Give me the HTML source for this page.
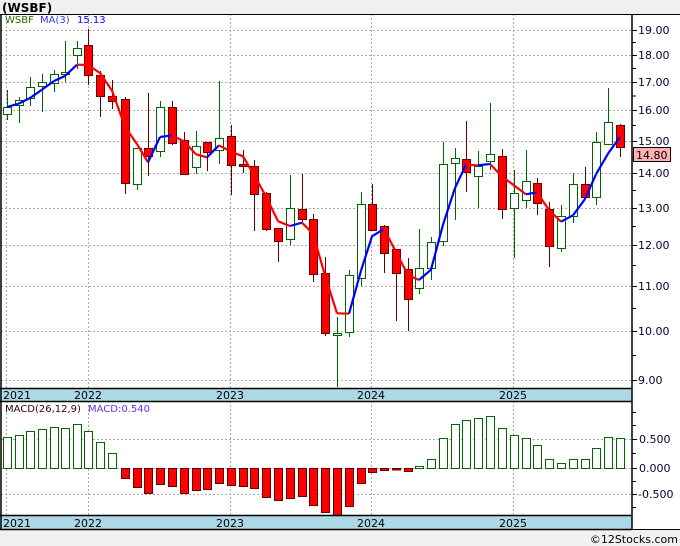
<!DOCTYPE html>
<html><head><meta charset="utf-8"><style>
html,body{margin:0;padding:0;background:#f0f0f0;}
#c{position:relative;width:680px;height:546px;overflow:hidden;font-family:"DejaVu Sans","Liberation Sans",sans-serif;}
</style></head><body><div id="c">
<svg id="s" width="680" height="546" xmlns="http://www.w3.org/2000/svg" style="position:absolute;left:0;top:0" font-family="DejaVu Sans, Liberation Sans, sans-serif">
<rect x="0" y="0" width="680" height="546" fill="#f0f0f0"/>
<rect x="1" y="14" width="679" height="515" fill="#fff"/>
<text x="2" y="12" font-size="12" font-weight="bold" fill="#000">(WSBF)</text>
<g id="g"></g>
</svg>
</div>
<script>
var g=document.getElementById('g'),h='';
function L(x1,y1,x2,y2,c,w,d){h+='<line x1="'+x1+'" y1="'+y1+'" x2="'+x2+'" y2="'+y2+'" stroke="'+c+'" stroke-width="'+(w||1)+'"'+(d?' stroke-dasharray="'+d+'"':'')+'/>';}
function R(x,y,w,ht,f,s){h+='<rect x="'+x+'" y="'+y+'" width="'+w+'" height="'+ht+'" fill="'+f+'"'+(s?' stroke="'+s+'"':'')+'/>';}
function T(x,y,t,c,sz,a){h+='<text x="'+x+'" y="'+y+'" font-size="'+(sz||11)+'" fill="'+c+'"'+(a?' text-anchor="'+a+'"':'')+'>'+t+'</text>';}
var pl=[[19,30],[18,55],[17,82],[16,110],[15,141],[14,173],[13,208],[12,245],[11,286],[10,331],[9,380]];
pl.forEach(function(p){L(1,p[1]+.5,632,p[1]+.5,'#aaa',1,'2,2');});
var yrs=[[6,'2021'],[88,'2022'],[230,'2023'],[371,'2024'],[513,'2025']];
yrs.forEach(function(v){L(v[0]+.5,14,v[0]+.5,388,'#aaa',1,'2,2');L(v[0]+.5,401,v[0]+.5,515,'#aaa',1,'2,2');});
[439,468,494].forEach(function(y){L(1,y+.5,632,y+.5,'#aaa',1,'2,2');});
var C=[[7,107,114,90,120,1],[19,100,105,97,123,1],[30,87,98,77,106,1],[42,82,86,74,112,1],[54,74,83,70,92,1],[65,72,74,41,82,1],[77,48,55,41,69,1],[88,45,75,29,85,0],[100,75,96,71,117,0],[112,96,101,80,109,0],[125,99,183,97,194,0],[137,148,184,148,190,1],[148,148,156,93,176,0],[160,107,151,101,157,1],[172,107,143,101,145,0],[184,140,174,132,174,0],[196,146,167,131,174,1],[207,142,152,142,171,0],[219,138,150,81,164,1],[231,136,165,125,195,0],[243,164,166,150,173,0],[254,166,194,160,231,0],[266,193,229,192,231,0],[278,228,241,228,262,0],[290,208,239,175,245,1],[302,209,219,174,222,0],[313,219,274,214,282,0],[325,273,333,257,336,0],[337,333,335,317,387,1],[349,275,332,270,337,1],[361,204,278,192,286,1],[372,204,230,184,230,0],[384,226,253,225,273,0],[396,249,273,249,321,0],[408,269,299,258,331,0],[419,268,288,229,294,1],[431,242,268,237,280,1],[443,164,241,142,246,1],[455,158,163,148,220,1],[466,159,172,121,192,0],[478,166,176,151,208,1],[490,154,161,103,170,1],[502,156,209,149,219,0],[514,193,208,170,258,1],[526,181,200,150,208,1],[537,183,203,178,215,0],[549,209,246,202,267,0],[561,216,248,205,252,1],[573,184,216,173,223,1],[585,184,197,167,197,0],[596,142,197,132,205,1],[608,122,144,88,144,1],[620,125,147,124,157,0]];
C.forEach(function(c){var col=c[5]?'#006600':'#660000';L(c[0]+.5,c[3],c[0]+.5,c[4],col,1);
 var bh=Math.max(c[2]-c[1],1);
 if(c[5])R(c[0]-3.5,c[1]+.5,8,bh,'#fff',col);else R(c[0]-3.5,c[1]+.5,8,bh,'#ff0000','#660000');});
var cl=C.map(function(c){return c[5]?c[1]:c[2];});
var ma=[];for(var i=0;i<cl.length;i++){var a=cl.slice(Math.max(0,i-2),i+1);ma.push(a.reduce(function(s,v){return s+v;},0)/a.length);}
for(var i=1;i<ma.length;i++){var up=ma[i]<=ma[i-1];L(C[i-1][0],ma[i-1],C[i][0],ma[i],up?'#0000ff':'#ff0000',2.2);}
var M=[437,435,431,429,427,428,424,431,442,453,478,487,493,484,486,493,490,489,483,485,486,488,497,500,498,496,505,512,515,506,483,472,470,469.5,471,466,459,438,424,420,418,416,428,435,438,445,459,463,459,459,448,437,438];
M.forEach(function(v,i){var x=C[i][0];if(v<468)R(x-3.5,v+.5,8,468-v,'#fff','#006600');else R(x-3.5,468.5,8,v-468,'#ff0000','#660000');});
[[388,401],[515,529]].forEach(function(b){R(0,b[0],632,b[1]-b[0],'#add8e6');L(0,b[0]+.5,632,b[0]+.5,'#000',1.5);L(0,b[1]+.5,632,b[1]+.5,'#000',1.5);
 yrs.forEach(function(v,k){if(k==0)T(3,b[1]-2,v[1],'#000',11);else T(v[0],b[1]-2,v[1],'#000',11,'middle');});});
L(1,14,1,529,'#000',1.5);L(0,14.5,680,14.5,'#000',1);L(632,14,632,529,'#000',1.5);L(0,529.5,680,529.5,'#000',1);
pl.forEach(function(p){L(632,p[1]+.5,637,p[1]+.5,'#000');T(638,p[1]+4,p[0].toFixed(2),'#100030',11);});
for(var k=0;k<pl.length-1;k++){var m=(pl[k][1]+pl[k+1][1])/2;L(632,m,636,m,'#000');}
[[439,'0.500'],[468,'0.000'],[494,'-0.500']].forEach(function(p){L(632,p[0]+.5,637,p[0]+.5,'#000');T(p[1][0]=='-'?638:639,p[0]+4,p[1],'#100030',11);});
[412,425,453,481,507].forEach(function(y){L(632,y+.5,636,y+.5,'#000');});
R(633.5,147.5,37,14,'#ffb0b0','#000');T(636,159,'14.80','#000',11);
T(5,23,'WSBF','#336600',10);T(40,23,'MA(3)','#3333ff',10);T(77,23,'15.13','#0000ff',10);
T(5,412,'MACD(26,12,9)','#330000',10);T(88,412,'MACD:0.540','#6633ff',10);
T(678,543,'©12Stocks.com','#000',11,'end');
g.innerHTML=h;
</script>
</body></html>
